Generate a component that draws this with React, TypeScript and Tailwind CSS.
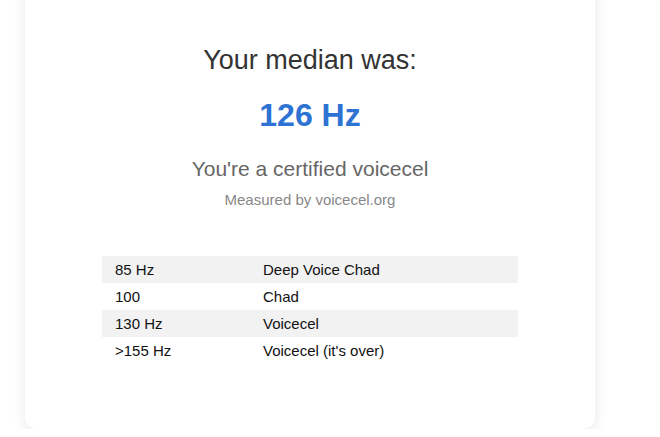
const rows = [
  { hz: '85 Hz', label: 'Deep Voice Chad' },
  { hz: '100', label: 'Chad' },
  { hz: '130 Hz', label: 'Voicecel' },
  { hz: '>155 Hz', label: "Voicecel (it's over)" },
];

export default function App() {
  return (
    <div className="min-h-screen bg-white pl-[25px] font-['Liberation_Sans',Arial,sans-serif]">
      <div className="-mt-5 w-[570px] rounded-xl bg-white pt-[64px] pb-[65px] shadow-[0_4px_14px_rgba(0,0,0,0.09)]">
        <h2 className="text-center text-[27px] leading-[32px] text-[#333]">Your median was:</h2>
        <div className="mt-[21px] text-center text-[32px] font-bold leading-[37px] text-[#2e73d3]">126 Hz</div>
        <p className="mt-[23px] text-center text-[21px] leading-[24px] text-[#666]">You're a certified voicecel</p>
        <p className="mt-[10px] text-center text-[15px] leading-[18px] text-[#888]">Measured by voicecel.org</p>

        <div className="mx-auto mt-[47px] w-[416px] text-[15px] leading-[17px] text-[#111]">
          {rows.map((r, i) => (
            <div
              key={r.hz}
              className={`grid h-[27px] grid-cols-[149px_1fr] items-center ${i % 2 === 0 ? 'bg-[#f2f2f2]' : 'bg-white'}`}
            >
              <span className="pl-[13px]">{r.hz}</span>
              <span className="pl-[12px]">{r.label}</span>
            </div>
          ))}
        </div>
      </div>
    </div>
  );
}
